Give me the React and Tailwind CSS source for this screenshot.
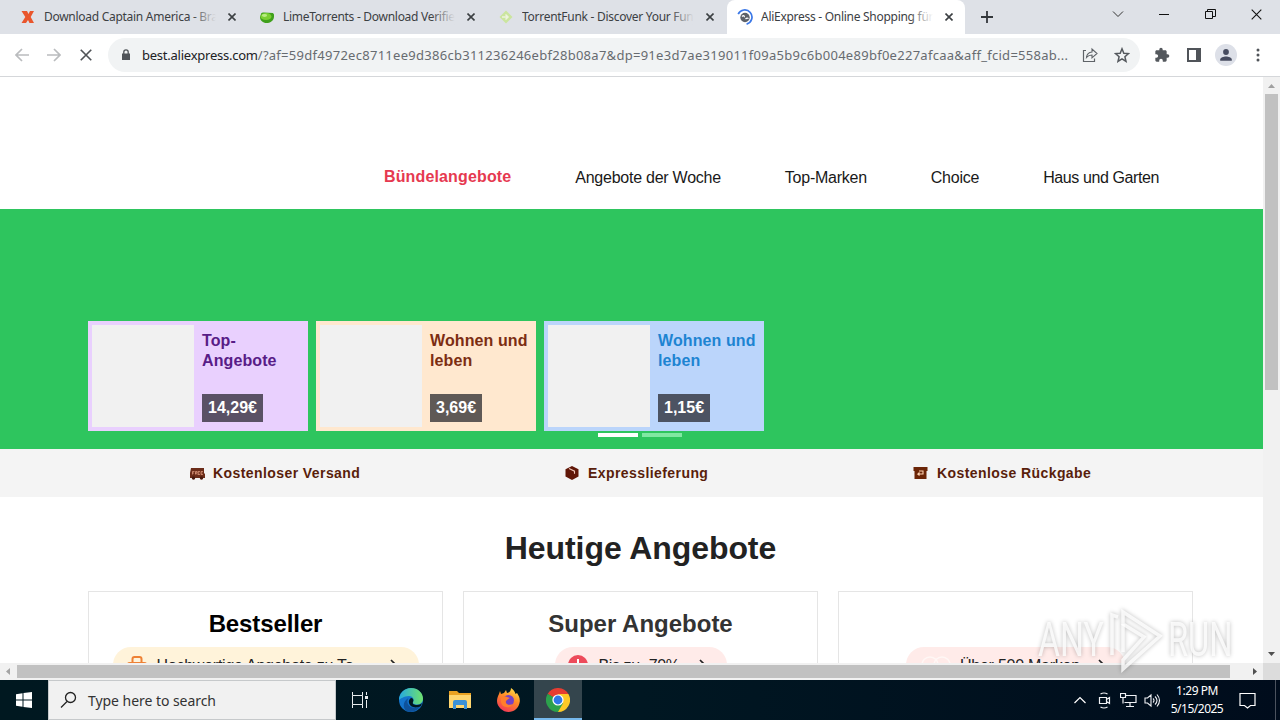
import React from "react";

const tabs = [
  { title: "Download Captain America - Bra", icon: "x" },
  { title: "LimeTorrents - Download Verified", icon: "lime" },
  { title: "TorrentFunk - Discover Your Funk", icon: "funk" },
];

const navItems = ["Angebote der Woche", "Top-Marken", "Choice", "Haus und Garten"];

const deals = [
  { title: "Top-Angebote", price: "14,29€", card: "bg-[#e9d0fe]", text: "text-[#581c87]", tag: "bg-[#5a5165]" },
  { title: "Wohnen und leben", price: "3,69€", card: "bg-[#ffe8cf]", text: "text-[#7c2d12]", tag: "bg-[#5f5956]" },
  { title: "Wohnen und leben", price: "1,15€", card: "bg-[#bbd5fb]", text: "text-[#1d84d2]", tag: "bg-[#4c5362]" },
];

function TabIcon({ type }) {
  if (type === "x") {
    return (
      <svg width="16" height="16" viewBox="0 0 16 16" className="shrink-0">
        <path d="M1.500 2h5.500l1.500 3L10 2h4l-3.300 6 3.300 6H9.500L8 11l-2 3H1.500l3.800-6z" fill="#e9562d" />
      </svg>
    );
  }
  if (type === "lime") {
    return (
      <svg width="16" height="16" viewBox="0 0 16 16" className="shrink-0">
        <path d="M2 5q0-2 3-1.500l9 .5q1.500 1 1 4c-.5 4-4 6-7.500 6S1 11.500 1 8z" fill="#3fa01c" />
        <ellipse cx="7" cy="7.500" rx="5.500" ry="3.600" fill="#7bcf33" />
        <ellipse cx="5.500" cy="6.500" rx="2.600" ry="1.400" fill="#b9ec84" />
      </svg>
    );
  }
  if (type === "funk") {
    return (
      <svg width="16" height="16" viewBox="0 0 16 16" fill="none" className="shrink-0">
        <path d="M8 1.500 14.500 8 8 14.500 1.500 8z" fill="#cbe59f" />
        <path d="M4 8h5M7.500 5.500L10 8l-2.500 2.500" stroke="#eef3df" strokeWidth="1.500" />
      </svg>
    );
  }
  return (
    <svg width="16" height="16" viewBox="0 0 16 16" fill="none" className="shrink-0">
      <circle cx="8" cy="8.500" r="4.700" fill="#5d6168" />
      <path d="M5 7.500c1.500-1.500 3-.5 2 .7M8.500 10c1-1 2-1 3-.5" stroke="#fff" strokeWidth="1.200" />
      <path d="M1.200 5.200A7.200 7.200 0 1 1 9.600 15.100" stroke="#3b78e7" strokeWidth="1.700" />
    </svg>
  );
}

function Cross({ size = 8, color = "#3c4043", width = 1.6 }) {
  return (
    <svg width={size} height={size} viewBox="0 0 8 8" className="shrink-0">
      <path d="M.5.5l7 7M7.500.5l-7 7" stroke={color} strokeWidth={width} />
    </svg>
  );
}

function TabTitle({ children, fade }) {
  return (
    <div className="relative w-[172px] shrink-0 overflow-hidden whitespace-nowrap text-[12px] leading-[16px] tracking-[-0.28px] text-[#3c4043]">
      {children}
      <div className={`absolute inset-y-0 right-0 w-6 bg-gradient-to-r from-transparent ${fade}`} />
    </div>
  );
}

function TabStrip() {
  return (
    <div className="flex h-[34px] bg-[#dee1e7] font-['Noto_Sans','Open_Sans',sans-serif]">
      <div className="flex w-[727px] rounded-br-lg pl-2">
        {tabs.map((tab, i) => (
          <div key={tab.icon} className="flex w-[239px] shrink-0 items-center pl-3">
            <TabIcon type={tab.icon} />
            <div className="w-2 shrink-0" />
            <TabTitle fade="to-[#dee1e7]">{tab.title}</TabTitle>
            <div className="w-3 shrink-0" />
            <Cross />
            {i < 2 && <div className="ml-[11px] h-5 w-px bg-[#85888e]" />}
          </div>
        ))}
      </div>
      <div className="flex w-[238px] shrink-0 items-center rounded-t-lg bg-white pl-[10px]">
        <TabIcon type="ali" />
        <div className="w-2 shrink-0" />
        <TabTitle fade="to-white">AliExpress - Online Shopping für</TabTitle>
        <div className="w-3 shrink-0" />
        <Cross />
      </div>
      <div className="flex flex-1 items-center pl-4">
        <svg width="12" height="12" viewBox="0 0 12 12">
          <path d="M6 0v12M0 6h12" stroke="#33373b" strokeWidth="1.800" />
        </svg>
      </div>
      <div className="flex h-7 items-center pr-[18px]">
        <svg width="12" height="12" viewBox="0 0 12 12" fill="none" className="mr-[35px]">
          <path d="M1 3.500l5 5 5-5" stroke="#333" />
        </svg>
        <svg width="10" height="12" viewBox="0 0 10 12" className="mr-9">
          <path d="M0 6.500h10" stroke="#111" />
        </svg>
        <svg width="11" height="12" viewBox="0 0 11 12" fill="none" className="mr-[35px]">
          <path d="M.5 3.500h7v7h-7zM2.500 3.500v-2h8v7h-3" stroke="#111" />
        </svg>
        <Cross size={11} color="#111" width={0.8} />
      </div>
    </div>
  );
}

function Toolbar() {
  return (
    <div className="flex h-[43px] items-center border-b border-[#d5d7da] bg-white font-['Noto_Sans','Open_Sans',sans-serif]">
      <div className="flex w-[108px] shrink-0 items-center pl-[15px]">
        <svg width="14" height="14" viewBox="0 0 14 14" fill="none">
          <path d="M14 7H1.500M7 1L1 7l6 6" stroke="#babcbe" strokeWidth="1.700" />
        </svg>
        <svg width="14" height="14" viewBox="0 0 14 14" fill="none" className="ml-[18px]">
          <path d="M0 7h12.500M7 1l6 6-6 6" stroke="#babcbe" strokeWidth="1.700" />
        </svg>
        <div className="ml-[19px]">
          <Cross size={12} color="#505357" width={1.1} />
        </div>
      </div>
      <div className="flex h-[34px] w-[1032px] shrink-0 items-center rounded-full bg-[#f1f3f4] pl-[14px]">
        <svg width="8" height="12" viewBox="0 0 8 12" fill="none">
          <path d="M0 4.500h8V11H0z" fill="#505459" />
          <path d="M1.800 5V3a2.200 2.200 0 0 1 4.400 0v2" stroke="#505459" strokeWidth="1.300" />
        </svg>
        <div className="ml-[12px] w-[930px] shrink-0 whitespace-nowrap text-[13px] leading-5 text-[#676b70]">
          <span className="text-[#202124] tracking-[-0.24px]">best.aliexpress.com</span>
          <span className="tracking-[0.275px]">
            /?af=59df4972ec8711ee9d386cb311236246ebf28b08a7&dp=91e3d7ae319011f09a5b9c6b004e89bf0e227afcaa&aff_fcid=558ab...
          </span>
        </div>
        <svg width="16" height="16" viewBox="0 0 16 16" fill="none" className="ml-[10px]">
          <path d="M4 3.500H1.500v11h11v-3" stroke="#5f6368" strokeWidth="1.200" />
          <path d="M4.500 10.500c.4-3.700 2.600-5.300 5.500-5.500V2l5 4.500-5 4.300V8c-2.400 0-4 .7-5.500 2.500z" stroke="#5f6368" strokeWidth="1.100" />
        </svg>
        <svg width="16" height="16" viewBox="0 0 16 16" fill="none" className="ml-4">
          <path d="M8 1.800l1.800 4.400 4.700.4-3.600 3.100 1.100 4.700L8 11.900l-4 2.500 1.100-4.700-3.600-3.100 4.700-.4z" stroke="#55595e" strokeWidth="1.500" />
        </svg>
      </div>
      <svg width="16" height="16" viewBox="0 0 24 24" className="ml-[14px]">
        <path
          d="M20.500 11H19V7c0-1.100-.9-2-2-2h-4V3.500a2.500 2.500 0 0 0-5 0V5H4c-1.100 0-2 .9-2 2v3.800h1.500a2.700 2.700 0 0 1 0 5.400H2V20c0 1.100.9 2 2 2h3.800v-1.500a2.700 2.700 0 0 1 5.400 0V22H17c1.100 0 2-.9 2-2v-4h1.500a2.500 2.500 0 0 0 0-5z"
          fill="#54585d"
        />
      </svg>
      <svg width="14" height="14" viewBox="0 0 14 14" className="ml-[17px]">
        <path d="M0 0h14v14H0zM2 2v10h7V2z" fill="#505459" fillRule="evenodd" />
      </svg>
      <div className="ml-[14px] flex size-[22px] items-center justify-center rounded-full bg-[#dde0e8]">
        <svg width="14" height="14" viewBox="0 0 14 14" fill="#474c60">
          <circle cx="7" cy="4" r="2.900" />
          <path d="M1.200 12.700v-1.300C1.200 9.400 4.600 8.400 7 8.400s5.800 1 5.800 3v1.300z" />
        </svg>
      </div>
      <svg width="4" height="14" viewBox="0 0 4 14" fill="#505459" className="ml-[19px]">
        <circle cx="2" cy="2" r="1.500" />
        <circle cx="2" cy="7" r="1.500" />
        <circle cx="2" cy="12" r="1.500" />
      </svg>
    </div>
  );
}

function DealCard({ deal }) {
  return (
    <div className={`flex h-[110px] w-[220px] p-1 ${deal.card}`}>
      <div className="h-[102px] w-[102px] shrink-0 bg-[#f1f1f1]" />
      <div className="flex flex-1 flex-col items-start justify-between pt-[6px] pb-[5px] pl-2">
        <div className={`w-[104px] text-[16px] leading-5 font-bold tracking-[0.1px] ${deal.text}`}>{deal.title}</div>
        <div className={`h-7 px-[6px] text-[16px] leading-7 font-bold text-white ${deal.tag}`}>{deal.price}</div>
      </div>
    </div>
  );
}

function Benefits() {
  return (
    <div className="flex h-12 items-center bg-[#f4f4f4] pl-[190px] text-[14px] font-bold tracking-[0.42px] text-[#591e0b]">
      <div className="flex w-[375px] items-center gap-2">
        <svg width="15" height="14" viewBox="0 0 15 14">
          <path d="M1 2h13v5l1 1v4H0V7z" fill="#6b2c19" />
          <circle cx="3.500" cy="12" r="1.700" fill="#48190e" />
          <circle cx="11.500" cy="12" r="1.700" fill="#48190e" />
          <path d="M2.500 8.500v-3h2M2.500 7H4M5.500 8.500v-3H7V7H5.500L7 8.500M10 5.500H8v3h2M8 7h1.500M13 5.500h-2v3h2M11 7h1.500" stroke="#e6a185" strokeWidth=".7" fill="none" />
        </svg>
        Kostenloser Versand
      </div>
      <div className="flex w-[348px] items-center gap-2">
        <svg width="15" height="14" viewBox="0 0 15 14">
          <path d="M7 0l6.500 3.200v7.300L7 14 .5 10.500V3.200z" fill="#601607" />
          <path d="M4 2.500l5.500 2.700v2.500" stroke="#efc6b9" strokeWidth="1.100" fill="none" />
        </svg>
        Expresslieferung
      </div>
      <div className="flex items-center gap-[9px]">
        <svg width="15" height="14" viewBox="0 0 15 14">
          <path d="M.5 1h14v4h-1v8h-12V5h-1z" fill="#6b2507" />
          <path d="M6 5h4v3H5l1.500-1.500M5 8l1.500 1.500" stroke="#ffd4b2" strokeWidth="1.100" fill="none" />
        </svg>
        Kostenlose Rückgabe
      </div>
    </div>
  );
}

function Chevron() {
  return (
    <svg width="8" height="14" viewBox="0 0 8 14" fill="none" className="shrink-0">
      <path d="M1 2l5 5-5 5" stroke="#222" strokeWidth="1.700" />
    </svg>
  );
}

function OfferCard({ title, titleColor, pill, children }) {
  return (
    <div className="flex h-[220px] w-[355px] flex-col items-center border border-[#e5e5e5] pt-4">
      <div className={`h-8 text-[24px] leading-8 font-bold ${titleColor}`}>{title}</div>
      <div className={`mt-[7px] flex h-9 items-center rounded-full text-[16px] whitespace-nowrap text-[#222] ${pill}`}>
        {children}
      </div>
    </div>
  );
}

function ShopPage() {
  return (
    <div className="h-[586px] w-[1263px] overflow-hidden bg-white font-['Liberation_Sans',Arial,sans-serif]">
      <div className="flex h-[132px] items-end gap-16 pb-[19px] pl-[384px] text-[16px] leading-6 text-[#191919]">
        <span className="mb-px font-bold tracking-[0.14px] text-[#e63950]">Bündelangebote</span>
        {navItems.map((item) => (
          <span key={item} className="tracking-[-0.25px] last:tracking-[-0.4px]">
            {item}
          </span>
        ))}
      </div>
      <div className="h-[240px] bg-[#2ec55e] pt-28">
        <div className="flex gap-2 pl-[88px]">
          {deals.map((deal) => (
            <DealCard key={deal.price} deal={deal} />
          ))}
        </div>
        <div className="mt-[2px] flex gap-1 pl-[598px]">
          <div className="h-1 w-10 bg-white" />
          <div className="h-1 w-10 bg-[#80e8a2]" />
        </div>
      </div>
      <Benefits />
      <div className="mt-[31px] pl-[18px] text-center text-[32px] leading-10 font-bold tracking-[-0.08px] text-[#222]">
        Heutige Angebote
      </div>
      <div className="mt-[23px] flex gap-5 pl-[88px]">
        <OfferCard title="Bestseller" titleColor="text-black tracking-[-0.1px]" pill="w-[306px] bg-[#fff3da] pl-[14px]">
          <svg width="20" height="20" viewBox="0 0 20 20" fill="none">
            <path d="M5.500 8V4q0-2 2-2h5q2 0 2 2v4" stroke="#ee8135" strokeWidth="2" />
            <path d="M0 9q0-2 3-2h14q3 0 3 2l-2 10H2z" fill="#ee8135" />
          </svg>
          <span className="ml-[10px] w-[233px] pt-px tracking-[-0.25px]">Hochwertige Angebote zu To...</span>
          <Chevron />
        </OfferCard>
        <OfferCard title="Super Angebote" titleColor="text-[#333]" pill="w-[172px] bg-[#ffebe9] pl-[13px]">
          <svg width="20" height="20" viewBox="0 0 20 20" fill="none">
            <circle cx="10" cy="10" r="10" fill="#ed4b5b" />
            <path d="M10 4v11M5 10l5 5 5-5" stroke="#fff" strokeWidth="2" />
          </svg>
          <span className="ml-[11px] w-[100px] pt-px tracking-[-0.4px]">Bis zu -70%</span>
          <Chevron />
        </OfferCard>
        <OfferCard title="" titleColor="text-white" pill="w-[219px] bg-[#ffebe9] pl-[14px]">
          <svg width="32" height="20" viewBox="0 0 32 20" fill="none" stroke="#fff7f5" strokeWidth="1.500">
            <circle cx="10" cy="10" r="8" />
            <circle cx="22" cy="10" r="8" />
          </svg>
          <span className="ml-[8px] w-[138px] pt-px tracking-[-0.25px]">Über 500 Marken</span>
          <Chevron />
        </OfferCard>
      </div>
    </div>
  );
}

function VerticalScrollbar() {
  return (
    <div className="flex h-[586px] w-[17px] flex-col items-center bg-[#f1f1f1]">
      <svg width="17" height="17" viewBox="0 0 17 17">
        <path d="M5 11h7L8.500 7z" fill="#a0a0a0" />
      </svg>
      <div className="h-[296px] w-[13px] bg-[#c1c1c1]" />
      <svg width="17" height="17" viewBox="0 0 17 17" className="mt-auto">
        <path d="M5 6h7l-3.500 4z" fill="#505050" />
      </svg>
    </div>
  );
}

function HorizontalScrollbar() {
  return (
    <div className="flex h-[17px] items-center bg-[#f1f1f1]">
      <svg width="17" height="17" viewBox="0 0 17 17">
        <path d="M10 5v7L6 8.500z" fill="#a3a3a3" />
      </svg>
      <div className="h-[13px] w-[1213px] bg-[#c1c1c1]" />
      <svg width="17" height="17" viewBox="0 0 17 17" className="ml-4">
        <path d="M7 5v7l4-3.500z" fill="#505050" />
      </svg>
      <div className="h-[17px] w-[17px] bg-[#dcdcdc]" />
    </div>
  );
}

function Watermark() {
  return (
    <div className="absolute top-[605px] left-[1038px] flex h-[70px] items-center font-['Roboto',sans-serif] text-[48px] leading-none text-white/80 [filter:drop-shadow(0_0_2px_rgba(0,0,0,0.32))]">
      <span className="w-[68px] origin-left scale-x-[0.7] whitespace-nowrap">ANY</span>
      <svg width="58" height="66" viewBox="0 0 58 66" fill="none" stroke="currentColor" strokeWidth="3.500" className="shrink-0">
        <path d="M17 5l37 24-37 33v-9l21-23-21-13z" />
        <path d="M17 17v28M12 10l-6-2v40" />
      </svg>
      <span className="ml-[4px] origin-left scale-x-[0.68] whitespace-nowrap">RUN</span>
    </div>
  );
}

function EdgeIcon() {
  return (
    <svg width="24" height="24" viewBox="0 0 24 24">
      <defs>
        <linearGradient id="edgeTop" x1="0" x2="1">
          <stop stopColor="#25a9e0" />
          <stop offset="1" stopColor="#6fe26d" />
        </linearGradient>
      </defs>
      <circle cx="12" cy="12" r="12" fill="#1475cd" />
      <path d="M0 12C0 5 5.500 0 12 0c7 0 12 5 12 10.500 0 4-3 6-6 6-3.500 0-4.500-1.500-4-2.500 2-3-1-6-4-6C5 8 1 11 0 12z" fill="url(#edgeTop)" />
      <path d="M9.500 10c-3 4 0 11 8 9.500l4-1.500c-3 5-9 7-13.500 5.300C3 20 4 13 9.500 10z" fill="#0e529b" />
      <path d="M12 10c2 0 3 2 2 4s1 3 4 3c2 0 4-1 5-2l-1 3c-6 3-11 1-12-3-.5-2 .2-4 2-5z" fill="#011820" />
    </svg>
  );
}

function ExplorerIcon() {
  return (
    <svg width="22" height="20" viewBox="0 0 22 20">
      <path d="M0 1h8l2 2h12v15H0z" fill="#eaa222" />
      <path d="M0 5h22v13H0z" fill="#ffd66f" />
      <path d="M4 19v-7q0-2 2-2h10q2 0 2 2v7h-3v-4H7v4z" fill="#3b91d6" />
    </svg>
  );
}

function FirefoxIcon() {
  return (
    <svg width="23" height="24" viewBox="0 0 23 24">
      <defs>
        <linearGradient id="fox" x1="0.8" y1="0" x2="0.3" y2="1">
          <stop stopColor="#ffe14b" />
          <stop offset=".45" stopColor="#ff8b25" />
          <stop offset="1" stopColor="#f23758" />
        </linearGradient>
      </defs>
      <path d="M3 3l1 3 3-1 2-3 1 3c2 0 4-2 4-5 3 2 4 4 4.500 6L20 5c2 3 3 5 2.800 8.500C22 20 17 24 11.500 24S0 19 0 13c0-3 1-5 2-7z" fill="url(#fox)" />
      <circle cx="11.500" cy="12.500" r="5.500" fill="#7441c5" />
      <path d="M4 10c2-2 4-2 6-1l3 1c-2 1-3 2-4 3-1 3 3 5 7 3-3 5-11 4-12-2z" fill="#ff7e2c" />
    </svg>
  );
}

function ChromeIcon() {
  return (
    <svg width="24" height="24" viewBox="0 0 24 24">
      <path d="M12 12L1.600 6A12 12 0 0 1 22.400 6z" fill="#e53d32" />
      <path d="M12 12L22.400 6A12 12 0 0 1 12 24z" fill="#fcc927" />
      <path d="M12 12v12A12 12 0 0 1 1.600 6z" fill="#2ca14c" />
      <path d="M12 6h10.400l-5.200 9z" fill="#fcc927" />
      <path d="M6.800 15L1.600 6 12 12zM6.800 15l10.400 0L12 24z" fill="#2ca14c" />
      <circle cx="12" cy="12" r="5.600" fill="#fff" />
      <circle cx="12" cy="12" r="4.400" fill="#2e78e8" />
    </svg>
  );
}

function Taskbar() {
  return (
    <div className="flex h-10 items-center bg-gradient-to-r from-[#001820] via-[#001722] to-[#000c1c] font-['Noto_Sans','Open_Sans',sans-serif] text-white">
      <div className="flex w-12 shrink-0 justify-center">
        <svg width="16" height="16" viewBox="0 0 16 16" fill="#fff">
          <path d="M0 2.200l6.500-.9v6.200H0zM7.500 1.100L16 0v7.500H7.500zM0 8.500h6.500v6.200L0 13.800zM7.500 8.500H16V16l-8.500-1.100z" />
        </svg>
      </div>
      <div className="flex h-10 w-72 shrink-0 items-center border border-[#c6c9cb] bg-[#f1f1f1] pl-[11px]">
        <svg width="18" height="18" viewBox="0 0 18 18" fill="none">
          <circle cx="10.500" cy="6.500" r="5" stroke="#222" strokeWidth="1.300" />
          <path d="M7 10.500L1 16.500" stroke="#222" strokeWidth="1.300" />
        </svg>
        <span className="ml-[10px] text-[14px] tracking-[-0.05px] whitespace-nowrap text-[#333]">Type here to search</span>
      </div>
      <svg width="18" height="18" viewBox="0 0 18 18" fill="none" stroke="#e8edef" className="ml-[15px] shrink-0">
        <path d="M1.500 1v3.500h10V1M1.500 17v-3.500h10V17M1.500 4.500v9M11.500 4.500v9M15.500 1v3M15.500 9v8" />
        <path d="M14 6.500h3" strokeWidth="3" />
      </svg>
      <div className="ml-[30px]">
        <EdgeIcon />
      </div>
      <div className="ml-[26px]">
        <ExplorerIcon />
      </div>
      <div className="ml-[26px]">
        <FirefoxIcon />
      </div>
      <div className="ml-[14px] flex h-10 w-12 items-center justify-center border-b-2 border-[#76b9ed] bg-[#34454d] pt-[2px]">
        <ChromeIcon />
      </div>
      <div className="ml-auto flex shrink-0 items-center">
        <svg width="12" height="8" viewBox="0 0 12 8" fill="none">
          <path d="M.5 7L6 1.500 11.500 7" stroke="#fff" strokeWidth="1.200" />
        </svg>
        <svg width="13" height="17" viewBox="0 0 13 17" fill="none" stroke="#eef0f4" className="ml-3">
          <path d="M1.500 5.500h7v6h-7zM8.500 7.500l3-2v6l-3-2M2.500 2q3.500-2 7 0M2.500 15q3.500 2 7 0" strokeWidth="1.200" />
        </svg>
        <svg width="17" height="16" viewBox="0 0 17 16" fill="none" stroke="#eef0f4" className="ml-[9px]">
          <path d="M6 3.500h10v7H4.500M.5 1.500h5v4h-5zM3 5.500v6M6 14.500h8M10 10.500v4" strokeWidth="1.200" />
        </svg>
        <svg width="17" height="15" viewBox="0 0 17 15" fill="none" stroke="#eef0f4" className="ml-[7px]">
          <path d="M1 5h2.500L7 2v11L3.500 10H1zM9 5.500q2 2 0 4M11 3.500q4 4 0 8M13 1.500q5 6 0 12" strokeWidth="1.100" />
        </svg>
        <div className="ml-[9px] w-[54px] text-center text-[12px] leading-[18px] whitespace-nowrap">
          <div className="tracking-[-0.45px]">1:29 PM</div>
          <div className="tracking-[-0.5px]">5/15/2025</div>
        </div>
        <svg width="17" height="17" viewBox="0 0 17 17" fill="none" className="ml-[15px]">
          <path d="M1 1.500h15v12h-4.500L8.500 16l-3-2.500H1z" stroke="#fff" strokeWidth="1.200" />
        </svg>
        <div className="mr-1 ml-[19px] h-10 w-px bg-[#4b525e]" />
      </div>
    </div>
  );
}

export default function App() {
  return (
    <div className="relative h-[720px] w-[1280px] overflow-hidden">
      <TabStrip />
      <Toolbar />
      <div className="flex">
        <ShopPage />
        <VerticalScrollbar />
      </div>
      <HorizontalScrollbar />
      <Taskbar />
      <Watermark />
    </div>
  );
}
